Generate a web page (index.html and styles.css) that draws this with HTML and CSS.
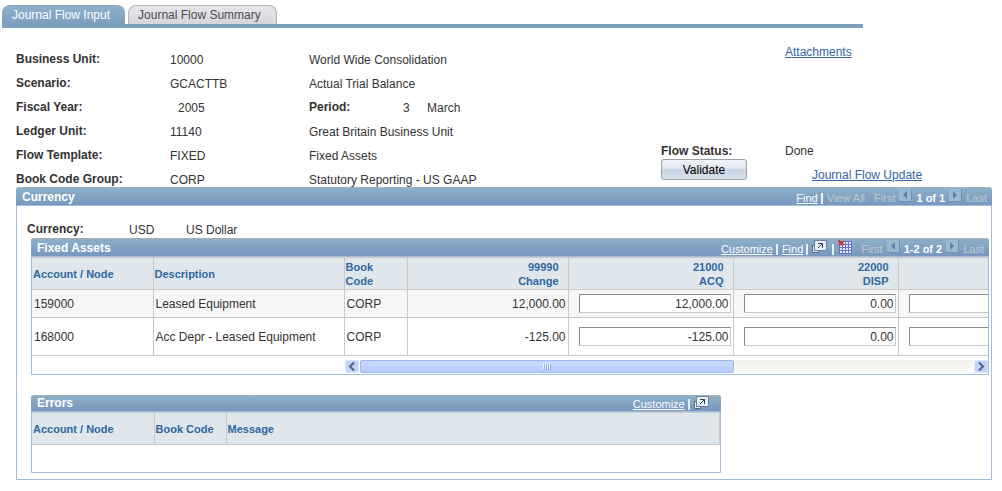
FILE: index.html
```html
<!DOCTYPE html>
<html lang="en">
<head>
<meta charset="utf-8">
<title>Journal Flow Input</title>
<link rel="stylesheet" href="styles.css">
</head>
<body>
<svg class="sprite" aria-hidden="true">
  <symbol id="popup" viewBox="0 0 15 13">
    <path d="M0.5 5.5H3V10H6.5V12.5H0.5Z" fill="#e8edf4" stroke="#59677c"/>
    <rect x="2.5" y="0.5" width="12" height="10" fill="#e7edf5" stroke="#6883a8"/>
    <path d="M6 3.5H10.5V8M10.5 3.5L6 8" fill="none" stroke="#37424f"/>
  </symbol>
  <symbol id="grid" viewBox="0 0 14 14">
    <rect x="1" y="1" width="13" height="13" fill="#6670c4"/>
    <path d="M2 2h2v2H2zM5 2h2v2H5zM8 2h2v2H8zM11 2h2v2h-2zM2 5h2v2H2zM5 5h2v2H5zM8 5h2v2H8zM11 5h2v2h-2zM2 8h2v2H2zM5 8h2v2H5zM8 8h2v2H8zM11 8h2v2h-2zM2 11h2v2H2zM5 11h2v2H5zM8 11h2v2H8zM11 11h2v2h-2z" fill="#e6e8ff"/>
    <path d="M0 0L4 4" fill="none" stroke="#d8343c" stroke-width="2"/>
    <path d="M5.5 0V5.5H0Z" fill="#d8343c"/>
  </symbol>
  <symbol id="prev" viewBox="0 0 13 13">
    <rect width="13" height="13" fill="#9ab8cf"/><path d="M0 12.5H12.5V0" fill="none" stroke="#6e90b4"/><path d="M8 2V10L4 6Z" fill="#5681ac"/>
  </symbol>
  <symbol id="next" viewBox="0 0 13 13">
    <rect width="13" height="13" fill="#9ab8cf"/><path d="M0 12.5H12.5V0" fill="none" stroke="#6e90b4"/><path d="M4 2V10L8 6Z" fill="#5681ac"/>
  </symbol>
</svg>

<nav class="tabs">
  <a class="tab active" href="#input">Journal Flow Input</a>
  <a class="tab" href="#summary">Journal Flow Summary</a>
</nav>

<main class="page">
  <section class="summary">
    <div class="fields">
      <b>Business Unit:</b><span>10000</span><span>World Wide Consolidation</span>
      <b>Scenario:</b><span>GCACTTB</span><span>Actual Trial Balance</span>
      <b>Fiscal Year:</b><span class="year">2005</span><span class="period"><b>Period:</b><span>3</span><span>March</span></span>
      <b>Ledger Unit:</b><span>11140</span><span>Great Britain Business Unit</span>
      <b>Flow Template:</b><span>FIXED</span><span>Fixed Assets</span>
      <b>Book Code Group:</b><span>CORP</span><span>Statutory Reporting - US GAAP</span>
    </div>
    <div class="actions">
      <a class="attachments" href="#attachments">Attachments</a>
      <b>Flow Status:</b><span>Done</span>
      <button class="validate" type="button">Validate</button>
      <a class="update" href="#update">Journal Flow Update</a>
    </div>
  </section>

  <section class="panel">
    <header class="bar">
      <h2>Currency</h2>
      <div class="tools">
        <a href="#find">Find</a><i class="sep"></i><span class="off">View All</span><span class="off first">First</span>
        <button class="nav" type="button" aria-label="Previous"><svg><use href="#prev"/></svg></button><b>1 of 1</b>
        <button class="nav" type="button" aria-label="Next"><svg><use href="#next"/></svg></button><span class="off">Last</span>
      </div>
    </header>
    <div class="content">
      <div class="currency"><b>Currency:</b><span>USD</span><span>US Dollar</span></div>

      <section class="box assets">
        <header class="bar">
          <h2>Fixed Assets</h2>
          <div class="tools">
            <a href="#customize">Customize</a><i class="sep"></i><a href="#find2">Find</a><i class="sep"></i>
            <button class="nav popup" type="button" aria-label="Zoom"><svg><use href="#popup"/></svg></button><i class="sep"></i>
            <button class="nav sheet" type="button" aria-label="Download"><svg><use href="#grid"/></svg></button><span class="off first">First</span>
            <button class="nav" type="button" aria-label="Previous"><svg><use href="#prev"/></svg></button><b>1-2 of 2</b>
            <button class="nav" type="button" aria-label="Next"><svg><use href="#next"/></svg></button><span class="off">Last</span>
          </div>
        </header>
        <div class="clip">
          <table class="assets-table">
            <colgroup><col class="c-node"><col class="c-desc"><col class="c-book"><col class="c-change"><col class="c-amount"><col class="c-amount"><col class="c-amount"></colgroup>
            <thead><tr><th>Account / Node</th><th>Description</th><th>Book<br>Code</th><th class="num tight">99990<br>Change</th><th class="num tight">21000<br>ACQ</th><th class="num tight">22000<br>DISP</th><th></th></tr></thead>
            <tbody>
              <tr class="odd"><td>159000</td><td>Leased Equipment</td><td>CORP</td><td class="num">12,000.00</td><td class="edit"><input type="text" value="12,000.00" aria-label="159000 ACQ"></td><td class="edit"><input type="text" value="0.00" aria-label="159000 DISP"></td><td class="edit"><input type="text" aria-label="159000 amount"></td></tr>
              <tr class="even"><td>168000</td><td>Acc Depr - Leased Equipment</td><td>CORP</td><td class="num">-125.00</td><td class="edit"><input type="text" value="-125.00" aria-label="168000 ACQ"></td><td class="edit"><input type="text" value="0.00" aria-label="168000 DISP"></td><td class="edit"><input type="text" aria-label="168000 amount"></td></tr>
            </tbody>
          </table>
        </div>
        <div class="scroll">
          <button type="button" aria-label="Scroll left"><svg viewBox="0 0 12 11"><path d="M8 1.5L4 5.5L8 9.5" fill="none" stroke="#4d6185" stroke-width="2"/></svg></button>
          <div class="track"><div class="thumb"><svg viewBox="0 0 8 7"><path d="M0.5 0V6M2.5 0V6M4.5 0V6M6.5 0V6" stroke="#eef4fe"/><path d="M1.5 1V7M3.5 1V7M5.5 1V7M7.5 1V7" stroke="#8cb0f8"/></svg></div></div>
          <button type="button" aria-label="Scroll right"><svg viewBox="0 0 12 11"><path d="M4 1.5L8 5.5L4 9.5" fill="none" stroke="#4d6185" stroke-width="2"/></svg></button>
        </div>
      </section>

      <section class="box errors">
        <header class="bar">
          <h2>Errors</h2>
          <div class="tools"><a href="#customize2">Customize</a><i class="sep"></i><button class="nav popup" type="button" aria-label="Zoom"><svg><use href="#popup"/></svg></button></div>
        </header>
        <table class="errors-table">
          <colgroup><col class="e-node"><col class="e-book"><col></colgroup>
          <thead><tr><th>Account / Node</th><th>Book Code</th><th>Message</th></tr></thead>
        </table>
      </section>
    </div>
  </section>
</main>
</body>
</html>
```
FILE: styles.css
```css
* { box-sizing: border-box; }
body {
  margin: 0;
  background: #fff;
  color: #333;
  font: 12px/16px "Liberation Sans", Arial, sans-serif;
}
a { color: #3366a0; }
button { font: inherit; padding: 0; cursor: pointer; }
h2 { margin: 0; font-size: 12px; line-height: 16px; }
.sprite { display: none; }

.tabs {
  display: flex;
  gap: 3px;
  margin: 5px 139px 0 2px;
  border-bottom: 4px solid #7f9fbe;
}
.tab {
  height: 19px;
  padding: 0 15px 0 9px;
  border: 1px solid #b4b4b8;
  border-bottom: 0;
  border-radius: 8px 8px 0 0;
  background: linear-gradient(#e6e6ea, #d6d6da);
  color: #4b4b55;
  line-height: 18px;
  text-decoration: none;
}
.tab.active {
  padding-right: 14px;
  border-color: #8da5ba;
  background: linear-gradient(#8fb0c9, #7d9ebf);
  color: #fff;
}

.page { padding: 0 10px 11px 16px; }
.summary { display: flex; height: 159px; padding-top: 16px; }
.fields {
  display: grid;
  grid-template-columns: 154px 139px 352px;
  grid-auto-rows: 16px;
  row-gap: 8px;
  padding-top: 8px;
}
.fields > b { margin-top: -1px; }
.year { padding-left: 8px; }
.period { display: grid; grid-template-columns: 94px 24px auto; }
.period b { margin-top: -1px; }
.actions {
  display: grid;
  grid-template-columns: 124px auto;
  grid-template-rows: 99px 16px 24px;
  align-content: start;
}
.attachments { grid-column: 2; }
.validate {
  width: 86px;
  height: 21px;
  border: 1px solid #9b9fa6;
  border-radius: 3px;
  background: linear-gradient(#f2f5f9, #dde4ee 48%, #c6d1e1 52%, #dce4f0);
  color: #000;
}
.update { align-self: end; padding-left: 27px; }

.panel { border: 1px solid #a3bddb; border-radius: 3px 3px 0 0; }
.bar {
  display: flex;
  justify-content: space-between;
  height: 19px;
  margin: -1px -1px 0;
  padding: 1px 5px 0 6px;
  border-top: 1px solid #a4b1ba;
  border-bottom: 1px solid #a3bddb;
  border-radius: 3px 3px 0 0;
  background: linear-gradient(#8eafc7, #7797bf);
  color: #fff;
}
.tools { display: flex; align-items: flex-end; font-size: 11px; line-height: 14px; }
.tools a { color: #fff; }
.tools .off { color: #c3c8cc; }
.tools b { margin: 0 4px; }
.tools .first { margin: 0 4px 0 9px; }
.tools .nav + .off { margin-left: 4px; }
.tools .nav + .first { margin-left: 9px; }
.sep { width: 2px; height: 11px; margin: 0 4px 1px 3px; background: #e8eff5; }
.nav { width: 13px; height: 13px; border: 0; background: none; align-self: flex-start; }
.nav svg { display: block; width: 13px; height: 13px; }
.popup, .popup svg { width: 15px; height: 13px; }
.popup + .sep { margin-left: 5px; }
.sheet, .sheet svg { width: 14px; height: 14px; }

.content { padding: 16px 2px 6px 14px; }
.currency {
  display: grid;
  grid-template-columns: 102px 57px auto;
  margin-left: -4px;
}
.currency b { margin-top: -1px; }
.box { border: 1px solid #a3bddb; border-radius: 3px 3px 0 0; }
.clip { overflow: hidden; }
table { border-collapse: collapse; table-layout: fixed; }
th {
  padding: 0 2px 0 1px;
  border: 1px solid #c9c9c9;
  background: #dfe6ec;
  color: #3068a0;
  font-size: 11px;
  line-height: 14px;
  text-align: left;
}
td { padding: 0 2px; border: 1px solid #c9c9c9; }
th:first-child, td:first-child { border-left: 0; }
.num { text-align: right; }
th.tight { padding-right: 9px; }
.assets-table { width: 1031px; }
.assets-table thead { height: 32px; }
.odd { height: 28px; background: #f7f7f7; }
.even { height: 38px; }
.c-node { width: 121px; }
.c-desc { width: 191px; }
.c-book { width: 63px; }
.c-change { width: 161px; }
.c-amount { width: 165px; }
.edit { padding: 0 2px 0 10px; }
.edit input {
  display: block;
  width: 100%;
  height: 19px;
  padding: 0 1px;
  border: 1px solid #c8c8c8;
  border-top-color: #8b8b8b;
  border-left-color: #8b8b8b;
  background: #fff;
  color: #333;
  font: inherit;
  text-align: right;
}
.scroll { display: flex; gap: 1px; height: 18px; margin-left: 313px; padding-top: 4px; }
.scroll button {
  width: 14px;
  height: 13px;
  border: 1px solid #dce6fb;
  border-radius: 2px;
  background: #c1d2fb;
}
.scroll svg { display: block; }
.track { flex: 1; background: linear-gradient(#f1f0ea, #fefefc); }
.thumb {
  display: flex;
  align-items: center;
  justify-content: center;
  width: 61%;
  height: 13px;
  border: 1px solid #9db9f2;
  border-radius: 2px;
  background: linear-gradient(#cadafe, #b6cbfc);
}
.thumb svg { width: 8px; height: 7px; }
.errors { width: 72%; height: 78px; margin-top: 20px; }
.errors .bar { height: 17px; padding: 0 12px 0 6px; }
.errors h2 { line-height: 15px; }
.errors-table { width: 100%; }
.errors-table thead { height: 32px; }
.e-node { width: 122px; }
.e-book { width: 72px; }
```
